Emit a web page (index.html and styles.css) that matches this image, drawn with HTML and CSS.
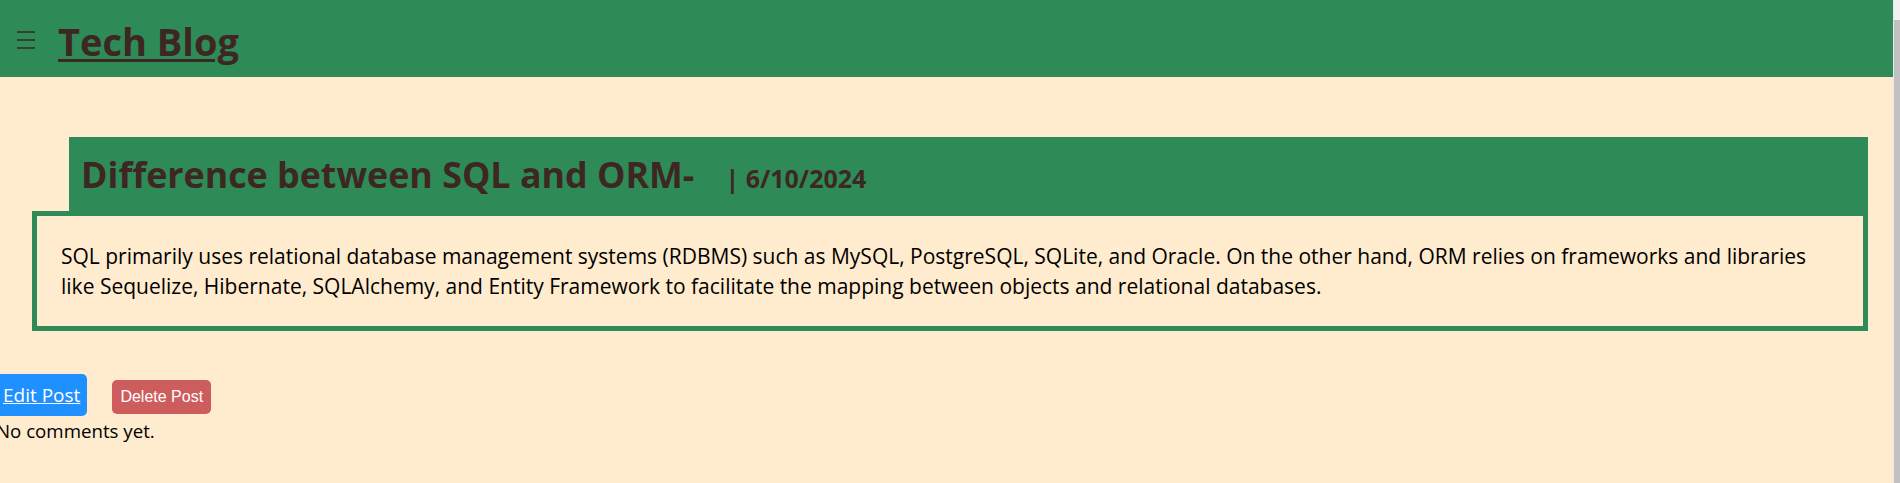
FILE: index.html
```html
<!DOCTYPE html>
<html lang="en">
<head>
<meta charset="utf-8">
<title>Tech Blog</title>
<link rel="stylesheet" href="styles.css">
</head>
<body>
<header class="site-header">
  <button class="menu-toggle" aria-label="Menu">
    <svg width="18" height="18" viewBox="0 0 18 18"><path d="M0 1H18M0 9H18M0 17H18" stroke="currentColor" stroke-width="1.6"/></svg>
  </button>
  <h1 class="site-title"><a href="#">Tech Blog</a></h1>
</header>
<main class="page">
  <article class="post">
    <div class="post-head">
      <h2 class="post-title">Difference between SQL and ORM-<span class="post-date">| 6/10/2024</span></h2>
    </div>
    <div class="post-body">
      <p>SQL primarily uses relational database management systems (RDBMS) such as MySQL, PostgreSQL, SQLite, and Oracle. On the other hand, ORM relies on frameworks and libraries like Sequelize, Hibernate, SQLAlchemy, and Entity Framework to facilitate the mapping between objects and relational databases.</p>
    </div>
  </article>
  <section class="post-footer">
    <div class="post-actions">
      <a class="btn-edit" href="#">Edit Post</a>
      <button class="btn-delete" type="button">Delete Post</button>
    </div>
    <p class="comments-empty">No comments yet.</p>
  </section>
</main>
<div class="scrollbar" aria-hidden="true"><span class="scrollbar-thumb"></span></div>
</body>
</html>
```

FILE: styles.css
```css
html, body {
  margin: 0;
  background: #FFEBCD;
}

body {
  font-family: "Open Sans", "Noto Sans", sans-serif;
  color: #000;
}

.site-header {
  height: 77px;
  background: #2E8B57;
  display: flex;
  align-items: center;
  gap: 23px;
  padding-left: 17px;
}

.menu-toggle {
  background: none;
  border: 0;
  padding: 0;
  margin-top: 2px;
  color: #3E2723;
  display: flex;
}

.site-title {
  margin: 4px 0 0;
  font-size: 38px;
  font-weight: 700;
  line-height: 1;
}

.site-title a {
  color: #3E2723;
  text-decoration-thickness: 3px;
  text-underline-offset: 3px;
}

.page {
  padding-top: 60px;
}

.post {
  margin: 0 32px;
}

.post-head {
  margin-left: 37px;
  height: 74px;
  background: #2E8B57;
  padding: 0 12px;
}

.post-title {
  margin: 0;
  font-size: 35.8px;
  font-weight: 700;
  line-height: 74px;
  color: #3E2723;
  white-space: nowrap;
}

.post-date {
  font-size: 25px;
  margin-left: 31px;
}

.post-body {
  border: 5px solid #2E8B57;
  padding: 25px 24px 25px;
}

.post-body p {
  margin: 0;
  font-size: 21px;
  line-height: 30px;
}

.post-footer {
  margin-top: 43px;
  margin-left: -4px;
}

.post-actions {
  display: flex;
  align-items: baseline;
  gap: 25px;
}

.btn-edit {
  display: inline-block;
  background: #1E90FF;
  color: #fff;
  font-size: 19px;
  line-height: 26px;
  padding: 8px 7px;
  border-radius: 5px;
}

.btn-delete {
  background: #CD5C5C;
  color: #fff;
  border: 0;
  border-radius: 5px;
  font-family: "Liberation Sans", Arial, sans-serif;
  font-size: 16px;
  padding: 8px 8px;
}

.comments-empty {
  margin: 2px 0 0;
  font-size: 18.7px;
}

.scrollbar {
  position: fixed;
  top: 0;
  right: 0;
  bottom: 0;
  width: 6px;
  background: #f1f1f1;
  border-left: 1px solid #e8e8e8;
  display: flex;
  flex-direction: column;
  padding-top: 20px;
}

.scrollbar-thumb {
  flex: 1;
  background: #c1c1c1;
}
```
